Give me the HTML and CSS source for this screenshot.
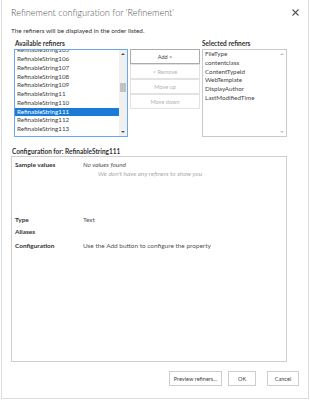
FILE: index.html
```html
<!DOCTYPE html>
<html lang="en">
<head>
    <meta charset="UTF-8">
    <meta name="viewport" content="width=device-width, initial-scale=1.0">
    <title>Refinement configuration</title>
    <link rel="stylesheet" href="styles.css">
</head>
<body>
    <div class="dialog">
        <div class="dialog-head">
            <h1 class="title">Refinement configuration for 'Refinement'</h1>
            <button class="close" type="button" aria-label="Close">
                <svg width="7" height="7" viewBox="0 0 7 7"><path d="M0.5 0.5L6.5 6.5M6.5 0.5L0.5 6.5" stroke="#555" stroke-width="1.1" fill="none"/></svg>
            </button>
        </div>
        <p class="intro">The refiners will be displayed in the order listed.</p>

        <div class="pickers">
            <div class="picker available">
                <div class="picker-label">Available refiners</div>
                <div class="listbox focused">
                    <ul class="items scrolled">
                        <li>RefinableString105</li>
                        <li>RefinableString106</li>
                        <li>RefinableString107</li>
                        <li>RefinableString108</li>
                        <li>RefinableString109</li>
                        <li>RefinableString11</li>
                        <li>RefinableString110</li>
                        <li class="active">RefinableString111</li>
                        <li>RefinableString112</li>
                        <li>RefinableString113</li>
                    </ul>
                    <div class="scrollbar">
                        <span class="arrow up"></span>
                        <span class="track"><span class="thumb"></span></span>
                        <span class="arrow down"></span>
                    </div>
                </div>
            </div>

            <div class="actions">
                <button type="button" class="btn">Add &gt;</button>
                <button type="button" class="btn" disabled>&lt; Remove</button>
                <button type="button" class="btn" disabled>Move up</button>
                <button type="button" class="btn" disabled>Move down</button>
            </div>

            <div class="picker selected">
                <div class="picker-label">Selected refiners</div>
                <div class="listbox">
                    <ul class="items">
                        <li>FileType</li>
                        <li>contentclass</li>
                        <li>ContentTypeId</li>
                        <li>WebTemplate</li>
                        <li>DisplayAuthor</li>
                        <li>LastModifiedTime</li>
                    </ul>
                    <div class="scrollbar idle">
                        <span class="arrow up"></span>
                        <span class="track"></span>
                        <span class="arrow down"></span>
                    </div>
                </div>
            </div>
        </div>

        <div class="config">
            <div class="config-label">Configuration for: RefinableString111</div>
            <div class="config-box">
                <div class="row sample">
                    <div class="key">Sample values</div>
                    <div class="value">
                        <div class="empty">No values found</div>
                        <div class="empty-note">We don't have any refiners to show you</div>
                    </div>
                </div>
                <div class="row type">
                    <div class="key">Type</div>
                    <div class="value">Text</div>
                </div>
                <div class="row aliases">
                    <div class="key">Aliases</div>
                    <div class="value"></div>
                </div>
                <div class="row configuration">
                    <div class="key">Configuration</div>
                    <div class="value">Use the Add button to configure the property</div>
                </div>
            </div>
        </div>

        <div class="footer">
            <button type="button" class="btn preview">Preview refiners...</button>
            <button type="button" class="btn ok">OK</button>
            <button type="button" class="btn cancel">Cancel</button>
        </div>
    </div>
</body>
</html>
```

FILE: styles.css
```css
/* General */
body {
    margin: 0;
    padding: 0;
    background: #fff;
    font-family: 'Lato', 'Noto Sans', sans-serif;
    color: #333;
}

.dialog {
    box-sizing: border-box;
    width: 308px;
    height: 400px;
    margin: -1px 0 0 1px;
    border: 1px solid #dcdcdc;
    padding: 6px 9px 0 8px;
    display: flex;
    flex-direction: column;
}

/* Encabezado */
.dialog-head {
    display: flex;
    justify-content: space-between;
    align-items: flex-start;
    height: 20px;
}

.title {
    margin: 0 0 0 1px;
    font-size: 9.1px;
    line-height: 14px;
    font-weight: 300;
    color: #555;
}

.close {
    border: none;
    background: none;
    padding: 0;
    margin-top: 3px;
    width: 7px;
    height: 7px;
    display: block;
}

.close svg {
    display: block;
}

.intro {
    margin: 0 0 0 1px;
    font-size: 6.4px;
    line-height: 10px;
    color: #333;
}

/* Listas */
.pickers {
    display: flex;
    margin-top: 3px;
    margin-left: 4px;
}

.picker-label {
    font-size: 6.5px;
    font-weight: bold;
    line-height: 10px;
    color: #333;
    padding-left: 1px;
}

.selected .picker-label {
    padding-left: 0;
}

.listbox {
    box-sizing: border-box;
    height: 88px;
    border: 1px solid #c9c9c9;
    display: flex;
    overflow: hidden;
    background: #fff;
}

.listbox.focused {
    border-color: #66a8ea;
}

.available .listbox {
    width: 114px;
}

.selected .listbox {
    width: 85px;
}

.items {
    list-style: none;
    margin: 0;
    padding: 0;
    flex: 1;
    min-width: 0;
}

.items.scrolled {
    margin-top: -3.7px;
}

.items li {
    height: 8.75px;
    line-height: 8.75px;
    font-size: 6.25px;
    padding-left: 2px;
    color: #444;
    white-space: nowrap;
}

.items li.active {
    background: #1a7ad6;
    color: #fff;
}

.scrollbar {
    width: 8px;
    display: flex;
    flex-direction: column;
    background: #f0f0f0;
}

.scrollbar.idle {
    background: #fff;
}

.arrow {
    height: 8px;
    display: flex;
    justify-content: center;
    align-items: center;
}

.arrow::before {
    content: "";
    border-left: 2px solid transparent;
    border-right: 2px solid transparent;
}

.arrow.up::before {
    border-bottom: 2px solid #505050;
}

.arrow.down::before {
    border-top: 2px solid #505050;
}

.idle .arrow.up::before {
    border-bottom-color: #c4c4c4;
}

.idle .arrow.down::before {
    border-top-color: #c4c4c4;
}

.track {
    flex: 1;
    padding-top: 25px;
}

.thumb {
    display: block;
    margin: 0 1px;
    height: 9px;
    background: #c2c2c2;
}

/* Botones */
.actions {
    display: flex;
    flex-direction: column;
    padding-top: 10px;
    margin: 0 2px 0 2px;
    width: 70px;
}

.btn {
    box-sizing: border-box;
    font-family: inherit;
    font-size: 5.6px;
    color: #444;
    background: #fff;
    border: 1px solid #ababab;
    padding: 0;
    height: 15px;
}

.actions .btn {
    width: 70px;
}

.btn:disabled {
    color: #b3b3b3;
    border-color: #e2e2e2;
}

/* Configuración */
.config {
    margin-top: 10px;
}

.config-label {
    font-size: 6.5px;
    font-weight: bold;
    line-height: 9px;
    color: #333;
    padding-left: 2px;
}

.config-box {
    box-sizing: border-box;
    width: 276px;
    height: 206px;
    margin-left: 1px;
    border: 1px solid #cfcfcf;
    padding: 3px 3px 0 3px;
}

.row {
    display: flex;
    font-size: 6.45px;
    line-height: 9px;
}

.key {
    width: 68px;
    font-weight: bold;
    color: #333;
}

.value {
    color: #555;
}

.row.sample {
    height: 55px;
}

.empty {
    font-style: italic;
    color: #555;
}

.empty-note {
    font-style: italic;
    color: #aaa;
    padding-left: 15px;
}

.row.aliases {
    margin-top: 2.5px;
}

.row.configuration {
    margin-top: 5px;
}

/* Pie */
.footer {
    display: flex;
    justify-content: flex-end;
    margin-top: 9px;
    gap: 6px;
}

.footer .btn {
    border-color: #cdcdcd;
    height: 15px;
}

.footer .preview {
    width: 53px;
}

.footer .ok {
    width: 28px;
}

.footer .cancel {
    width: 32px;
    margin-left: 5px;
}
```
